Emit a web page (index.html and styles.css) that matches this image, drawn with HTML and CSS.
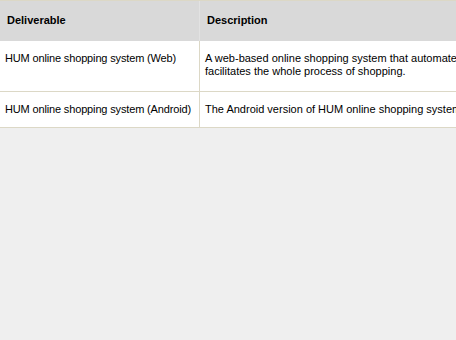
FILE: index.html
```html
<!DOCTYPE html>
<html>
<head>
<meta charset="utf-8">
<link rel="stylesheet" href="styles.css">
</head>
<body>
<div class="page">
  <table class="deliverables">
    <thead>
      <tr>
        <th class="col-name">Deliverable</th>
        <th class="col-desc">Description</th>
      </tr>
    </thead>
    <tbody>
      <tr class="tall">
        <td class="name">HUM online shopping system (Web)</td>
        <td>A web-based online shopping system that automates and facilitates the whole process of shopping.</td>
      </tr>
      <tr>
        <td class="name">HUM online shopping system (Android)</td>
        <td>The Android version of HUM online shopping system.</td>
      </tr>
    </tbody>
  </table>
</div>
</body>
</html>
```

FILE: styles.css
```css
html, body {
  margin: 0;
  padding: 0;
  background: #efefef;
}

.page {
  width: 456px;
  height: 340px;
  overflow: hidden;
}

.deliverables {
  border-collapse: collapse;
  table-layout: fixed;
  width: 515px;
  font-family: "Liberation Sans", Arial, sans-serif;
  font-size: 11px;
  line-height: 13px;
  color: #000;
  background: #fff;
}

.col-name {
  width: 185px;
}

.deliverables th {
  background: #d9d9d9;
  font-weight: bold;
  text-align: left;
  padding: 13px 7px 14px;
  border-top: 1px solid #dcd8c6;
  border-left: 1px solid #e2e2e2;
}

.deliverables th:first-child {
  border-left: none;
}

.deliverables td {
  padding: 11px 5px;
  vertical-align: top;
  border-bottom: 1px solid #dcd8c6;
  border-left: 1px solid #dcd8c6;
}

.deliverables td:first-child {
  border-left: none;
}

.deliverables .tall td {
  padding-bottom: 13px;
}

.deliverables td.name {
  white-space: nowrap;
  letter-spacing: -0.15px;
}
```
